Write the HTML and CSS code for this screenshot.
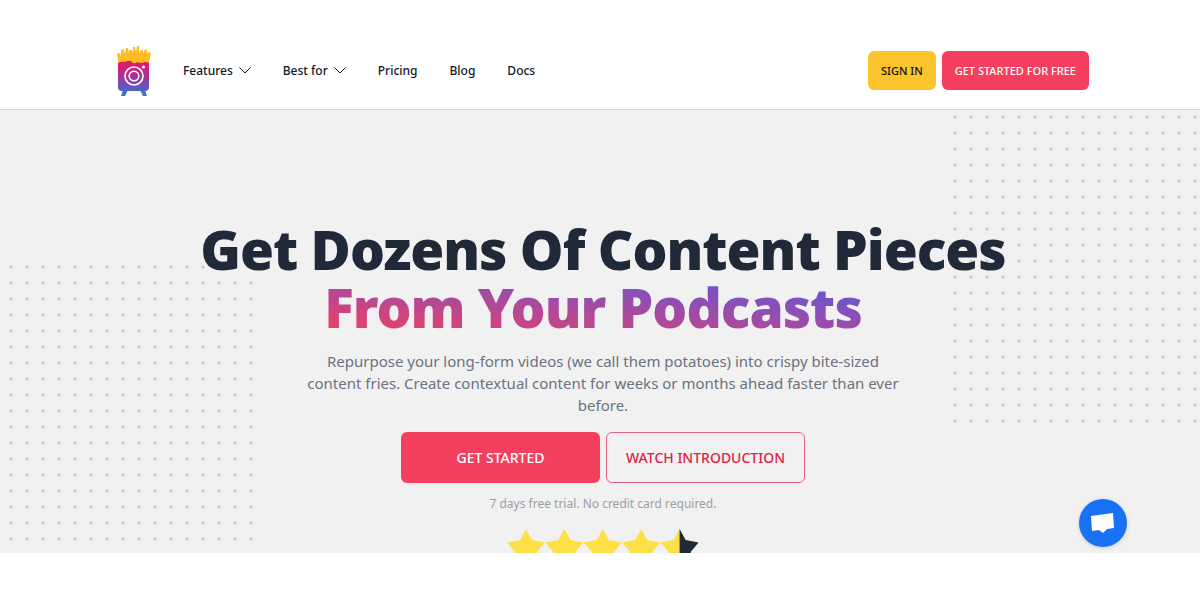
FILE: index.html
```html
<!DOCTYPE html>
<html lang="en">
<head>
    <meta charset="UTF-8" />
    <meta name="viewport" content="width=device-width, initial-scale=1" />
    <title>Get Dozens Of Content Pieces From Your Podcasts</title>
    <link rel="stylesheet" href="styles.css">
</head>
<body>
<header class="header">
    <a class="logo" href="#" aria-label="Home">
        <svg width="34" height="52" viewBox="0 0 34 52">
            <defs>
                <linearGradient id="boxFill" x1="0" y1="0" x2="0" y2="1">
                    <stop offset="0" stop-color="#e8175f" />
                    <stop offset="0.35" stop-color="#c42583" />
                    <stop offset="1" stop-color="#4b63cc" />
                </linearGradient>
            </defs>
            <path fill="#fbbf24" d="M2 22 L0 9 L3 8 L4 12 L4 5 L7 4 L8 10 L9 3 L11 3 L12 9 L12 5 L15 5 L16 8 L16 2 L18 2 L19 7 L20 1 L22 1 L22 9 L24 5 L26 5 L26 9 L28 4 L30 5 L30 10 L31 7 L34 8 L31 22 Z" />
            <path fill="none" stroke="#f9a91c" stroke-width="0.7" d="M5 9 L7 17 M13 8 L14 16 M18 6 L18 15 M22 6 L21 14 M28 9 L26 17" />
            <path fill="#3f6fd6" d="M6 45 H11 L8 51 H4 Z M23 45 H28 L30 51 H26 Z" />
            <path fill="url(#boxFill)" d="M1 18 Q5 16 8 17 Q11 15 14 16 Q17 20 20 17 Q23 18 25 18 Q29 16 32 18 V42 Q32 46 28 46 H5 Q1 46 1 42 Z" />
            <circle cx="17" cy="31" r="9" fill="none" stroke="#fff" stroke-width="1.6" />
            <circle cx="17" cy="31" r="4.8" fill="none" stroke="#fff" stroke-width="1.6" />
            <circle cx="26.5" cy="22" r="1.6" fill="#fff" />
        </svg>
    </a>
    <nav class="nav">
        <a href="#">Features
            <svg class="chevron" width="12" height="7" viewBox="0 0 12 7"><path d="M0.5 0.5 L6 6 L11.5 0.5" /></svg>
        </a>
        <a href="#">Best for
            <svg class="chevron" width="12" height="7" viewBox="0 0 12 7"><path d="M0.5 0.5 L6 6 L11.5 0.5" /></svg>
        </a>
        <a href="#">Pricing</a>
        <a href="#">Blog</a>
        <a href="#">Docs</a>
    </nav>
    <div class="actions">
        <button type="button" class="btn btn-yellow">SIGN IN</button>
        <button type="button" class="btn btn-red">GET STARTED FOR FREE</button>
    </div>
</header>

<main class="hero">
    <div class="dots dots-left"></div>
    <div class="dots dots-right"></div>
    <div class="hero-content">
        <h1>Get Dozens Of Content Pieces
            <span class="line"><span class="gradient">From Your Podcasts</span></span>
        </h1>
        <p class="lead">Repurpose your long-form videos (we call them potatoes) into crispy bite-sized content fries. Create contextual content for weeks or months ahead faster than ever before.</p>
        <div class="cta">
            <button type="button" class="btn btn-large btn-red">GET STARTED</button>
            <button type="button" class="btn btn-large btn-outline">WATCH INTRODUCTION</button>
        </div>
        <p class="note">7 days free trial. No credit card required.</p>
        <div class="stars">
            <svg width="192" height="38" viewBox="0 0 192 38" role="img" aria-label="4.5 stars">
                <defs>
                    <path id="star" d="M19 0 L25 11 L38 13.5 L30 23 L32 36 L19 30 L6 36 L8 23 L0 13.5 L13 11 Z" />
                    <clipPath id="rightHalf"><rect x="19" y="0" width="19" height="38" /></clipPath>
                </defs>
                <g fill="#fde047">
                    <use href="#star" />
                    <use href="#star" x="38.4" />
                    <use href="#star" x="76.8" />
                    <use href="#star" x="115.2" />
                    <use href="#star" x="153.6" />
                </g>
                <g transform="translate(153.6 0)"><use href="#star" fill="#1f2937" clip-path="url(#rightHalf)" /></g>
            </svg>
        </div>
    </div>
</main>

<button type="button" class="chat" aria-label="Open chat">
    <svg width="24" height="22" viewBox="0 0 24 22"><path fill="#fff" d="M0 4 L22 1 L23 16 L16 17 L12 21 L8 18 L1 19 Z" /></svg>
</button>
</body>
</html>
```

FILE: styles.css
```css
* {
    box-sizing: border-box;
}
body {
    margin: 0;
    position: relative;
    background-color: #fff;
    color: #111827;
    font-family: "Noto Sans", "Open Sans", sans-serif;
}
a {
    color: inherit;
    text-decoration: none;
}
.header {
    display: flex;
    align-items: center;
    padding: 32px 111px 0 117px;
    height: 110px;
    border-bottom: 1px solid #d4d4d4;
}
.logo svg {
    display: block;
}
.nav {
    display: flex;
    gap: 32px;
    margin-left: 32px;
    font-size: 12px;
    font-weight: 500;
}
.nav a {
    display: flex;
    align-items: center;
    gap: 6px;
}
.chevron path {
    fill: none;
    stroke: #111827;
}
.actions {
    display: flex;
    gap: 6px;
    margin-left: auto;
}
.btn {
    height: 39px;
    padding: 0 13px;
    border: none;
    border-radius: 6px;
    font-family: inherit;
    font-size: 11px;
    font-weight: 500;
    white-space: nowrap;
    cursor: pointer;
}
.btn-yellow {
    background-color: #fbc42d;
    color: #111;
}
.btn-red {
    background-color: #f43f5e;
    color: #fff;
}
.btn-large {
    width: 199px;
    height: 51px;
    font-size: 14px;
}
.btn-outline {
    background-color: transparent;
    border: 1px solid #e0637f;
    color: #e11d48;
}
.hero {
    position: relative;
    padding: 110px 0 0 6px;
    overflow: hidden;
    background-color: #f1f1f1;
}
.dots {
    position: absolute;
    background-image: radial-gradient(circle at 2px 2px, #c8cacc 1px, transparent 2px);
    background-size: 16px 16px;
}
.dots-left {
    left: 9px;
    top: 155px;
    bottom: 0;
    width: 246px;
}
.dots-right {
    left: calc(50% + 353px);
    right: 0;
    top: 5px;
    height: 312px;
}
.hero-content {
    position: relative;
    text-align: center;
}
h1 {
    margin: 0;
    color: #1f2937;
    font-size: 55px;
    font-weight: 900;
    line-height: 58px;
    letter-spacing: -1px;
}
.line {
    display: block;
    padding-right: 20px;
}
.gradient {
    display: inline-block;
    vertical-align: top;
    background-image: linear-gradient(to top right, #f43f5e, #5457e3);
    -webkit-background-clip: text;
    background-clip: text;
    color: transparent;
}
.lead {
    max-width: 600px;
    margin: 14px auto 16px;
    color: #6b7280;
    font-size: 15px;
    line-height: 22px;
}
.cta {
    display: flex;
    justify-content: center;
    gap: 6px;
}
.note {
    margin: 12px 0 16px;
    color: #9c9fa4;
    font-size: 12px;
    line-height: 18px;
}
.stars {
    height: 24px;
    overflow: hidden;
}
.chat {
    position: absolute;
    right: 73px;
    bottom: 6px;
    display: flex;
    align-items: center;
    justify-content: center;
    width: 48px;
    height: 48px;
    padding: 0;
    border: none;
    border-radius: 50%;
    background-color: #1972f5;
    box-shadow: 0 1px 4px rgba(0, 0, 0, 0.15);
    cursor: pointer;
}
```
